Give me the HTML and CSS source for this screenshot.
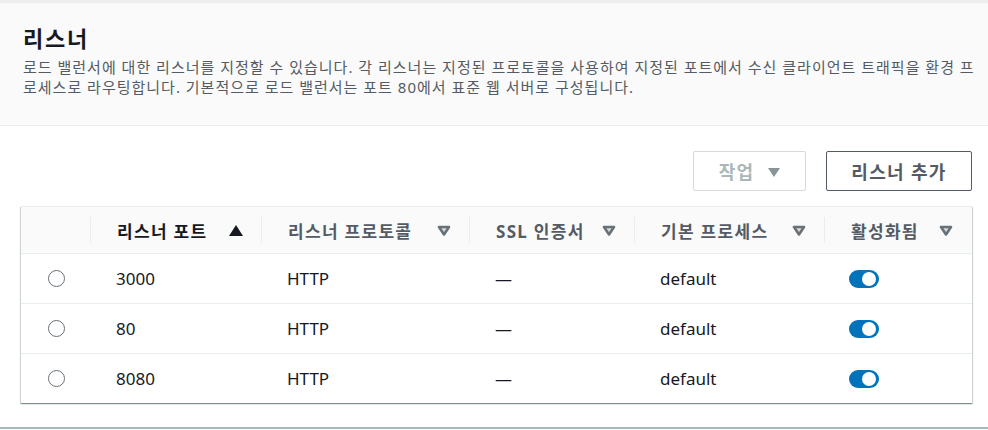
FILE: index.html
```html
<!DOCTYPE html>
<html lang="ko">
<head>
<meta charset="utf-8">
<link rel="stylesheet" href="styles.css">
</head>
<body>
<div class="page">
  <header class="panel-head">
    <h2 class="title">리스너</h2>
    <p class="desc">로드 밸런서에 대한 리스너를 지정할 수 있습니다. 각 리스너는 지정된 프로토콜을 사용하여 지정된 포트에서 수신 클라이언트 트래픽을 환경 프로세스로 라우팅합니다. 기본적으로 로드 밸런서는 포트 80에서 표준 웹 서버로 구성됩니다.</p>
  </header>
  <div class="actions">
    <button class="btn btn-disabled"><span class="ko">작업</span> <svg class="caret" width="12" height="9" viewBox="0 0 12 9"><polygon points="0,0 12,0 6,9" fill="#879596"/></svg></button>
    <button class="btn btn-normal"><span class="ko">리스너 추가</span></button>
  </div>
  <div class="table">
    <div class="row head">
      <div class="cell sel"></div>
      <div class="cell th active"><span>리스너 포트</span><svg class="sort" width="14" height="11" viewBox="0 0 14 11"><polygon points="7,0 14,11 0,11" fill="#16191f"/></svg></div>
      <div class="cell th"><span>리스너 프로토콜</span><svg class="sort" width="14" height="11" viewBox="0 0 14 11"><polygon points="2,2 12,2 7,9.5" fill="#d5dbdb" stroke="#687078" stroke-width="2.6" stroke-linejoin="round"/></svg></div>
      <div class="cell th"><span>SSL 인증서</span><svg class="sort" width="14" height="11" viewBox="0 0 14 11"><polygon points="2,2 12,2 7,9.5" fill="#d5dbdb" stroke="#687078" stroke-width="2.6" stroke-linejoin="round"/></svg></div>
      <div class="cell th"><span>기본 프로세스</span><svg class="sort" width="14" height="11" viewBox="0 0 14 11"><polygon points="2,2 12,2 7,9.5" fill="#d5dbdb" stroke="#687078" stroke-width="2.6" stroke-linejoin="round"/></svg></div>
      <div class="cell th last"><span>활성화됨</span><svg class="sort" width="14" height="11" viewBox="0 0 14 11"><polygon points="2,2 12,2 7,9.5" fill="#d5dbdb" stroke="#687078" stroke-width="2.6" stroke-linejoin="round"/></svg></div>
    </div>
    <div class="row">
      <div class="cell sel"><span class="radio"></span></div>
      <div class="cell">3000</div>
      <div class="cell">HTTP</div>
      <div class="cell">—</div>
      <div class="cell">default</div>
      <div class="cell"><span class="toggle"></span></div>
    </div>
    <div class="row">
      <div class="cell sel"><span class="radio"></span></div>
      <div class="cell">80</div>
      <div class="cell">HTTP</div>
      <div class="cell">—</div>
      <div class="cell">default</div>
      <div class="cell"><span class="toggle"></span></div>
    </div>
    <div class="row">
      <div class="cell sel"><span class="radio"></span></div>
      <div class="cell">8080</div>
      <div class="cell">HTTP</div>
      <div class="cell">—</div>
      <div class="cell">default</div>
      <div class="cell"><span class="toggle"></span></div>
    </div>
  </div>
  <div class="bottom-edge"></div>
</div>
</body>
</html>
```
FILE: styles.css
```css
* { box-sizing: border-box; }
html, body { margin: 0; padding: 0; background: #ffffff; }
body {
  font-family: "Noto Sans", "Noto Sans CJK KR", sans-serif;
  color: #16191f;
  width: 988px;
  height: 430px;
  overflow: hidden;
}
.page { display: flex; flex-direction: column; }
.panel-head {
  background: #fafafa;
  border-top: 3px solid #eceeee;
  border-bottom: 1px solid #eaeded;
  padding: 19px 12px 25px 23px;
  height: 126px;
}
.title {
  margin: 0;
  font-size: 22px;
  line-height: 32px;
  font-weight: 700;
  letter-spacing: 1.7px;
  color: #16191f;
}
.desc {
  margin: 3px 0 0 0;
  font-size: 15px;
  line-height: 20px;
  letter-spacing: 1px;
  color: #545b64;
}
.actions {
  display: flex;
  justify-content: flex-end;
  gap: 20px;
  padding: 25px 16px 0 0;
}
.btn {
  font-family: "Noto Sans", "Noto Sans CJK KR", sans-serif;
  font-size: 18px;
  font-weight: 700;
  height: 40px;
  border-radius: 2px;
  background: #ffffff;
  display: flex;
  align-items: center;
  justify-content: center;
  gap: 14px;
  padding: 0;
}
.ko { letter-spacing: 1.3px; }
.btn-disabled {
  width: 113px;
  border: 1px solid #d5dbdb;
  color: #aab7b8;
}
.btn-normal {
  width: 146px;
  border: 1px solid #545b64;
  color: #545b64;
}
.caret { display: block; margin-top: 2px; }
.table {
  margin: 15px 16px 0 21px;
  background: #ffffff;
  border-top: 1px solid #eaeded;
  box-shadow: 0 1px 1px 0 rgba(0,28,36,.3), 1px 1px 1px 0 rgba(0,28,36,.15), -1px 1px 1px 0 rgba(0,28,36,.15);
}
.row {
  display: grid;
  grid-template-columns: 69px 171px 208px 165px 190px 1fr;
  height: 50px;
  border-top: 1px solid #eaeded;
  align-items: center;
  font-size: 17px;
}
.row.head {
  height: 46px;
  border-top: none;
  background: #fafafa;
}
.cell {
  padding-left: 26px;
  display: flex;
  align-items: center;
}
.cell.sel { justify-content: center; padding-left: 0; }
.th {
  height: 26px;
  border-left: 1px solid #eaeded;
  justify-content: space-between;
  padding-right: 18px;
  font-weight: 700;
  letter-spacing: 1.3px;
  color: #545b64;
}
.th.active { color: #16191f; }
.th.last { padding-right: 19px; }
.sort { display: block; }
.radio {
  display: block;
  width: 17px;
  height: 17px;
  border: 1.5px solid #687078;
  border-radius: 50%;
  margin-left: 1px;
}
.toggle {
  position: relative;
  display: block;
  width: 30px;
  height: 18px;
  border-radius: 9px;
  background: #0073bb;
  margin-left: -1px;
}
.toggle::after {
  content: "";
  position: absolute;
  right: 3px;
  top: 2px;
  width: 14px;
  height: 14px;
  border-radius: 50%;
  background: #ffffff;
}
.bottom-edge {
  margin-top: 24px;
  height: 2px;
  background: #aab7b8;
}
```
